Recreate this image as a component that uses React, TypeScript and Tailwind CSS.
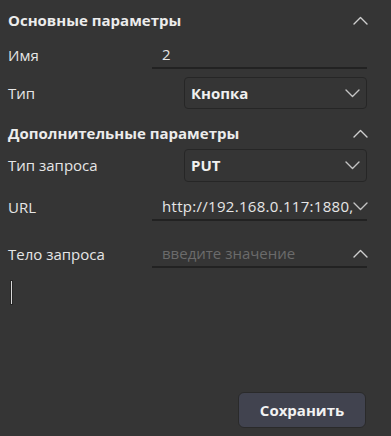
function Chevron({ up = false, className = "" }: { up?: boolean; className?: string }) {
  return (
    <svg width="15" height="9" viewBox="0 0 15 9" className={className} fill="none">
      <polyline
        points={up ? "1,8 7.5,1.5 14,8" : "1,1 7.5,7.5 14,1"}
        stroke="currentColor"
        strokeWidth="1.4"
        strokeLinecap="round"
        strokeLinejoin="round"
      />
    </svg>
  );
}

function Row({ label, className = "", children }: { label: string; className?: string; children: React.ReactNode }) {
  return (
    <div className={`flex items-center ${className}`}>
      <div className="w-[144px] shrink-0 text-[15px] text-[#e6e6e6]">{label}</div>
      <div className="flex-1 min-w-0">{children}</div>
    </div>
  );
}

function Header({ title, className = "" }: { title: string; className?: string }) {
  return (
    <div className={`flex items-center justify-between h-[30px] ${className}`}>
      <div className="text-[15px] font-bold text-[#ececec]">{title}</div>
      <Chevron up className="text-[#cfcfcf] mr-[-1px]" />
    </div>
  );
}

function SelectBox({ value, h }: { value: string; h: string }) {
  return (
    <div className={`ml-[32px] ${h} border border-[#262626] rounded-[4px] flex items-center justify-between pl-[6px] pr-[6px]`}>
      <span className="text-[15px] font-bold text-[#f0f0f0]">{value}</span>
      <Chevron className="text-[#c4c4c4]" />
    </div>
  );
}

export default function App() {
  return (
    <div
      className="w-[391px] h-[436px] bg-[#353535] flex flex-col pl-[8px] pr-[24px] pt-[5px]"
      style={{ fontFamily: '"Open Sans", "Noto Sans", sans-serif' }}
    >
      <Header title="Основные параметры" />
      <Row label="Имя" className="pt-[6px]">
        <div className="h-[28px] border-b-2 border-[#222222] flex items-center pl-[10px] text-[15px] text-[#e6e6e6]">2</div>
      </Row>
      <Row label="Тип" className="mt-[8px]">
        <SelectBox value="Кнопка" h="h-[32px]" />
      </Row>
      <Header title="Дополнительные параметры" className="mt-[9px]" />
      <Row label="Тип запроса" className="mt-[1px]">
        <SelectBox value="PUT" h="h-[33px]" />
      </Row>
      <Row label="URL" className="mt-[12px]">
        <div className="h-[27px] border-b-2 border-[#222222] flex items-center pl-[10px] text-[15px] text-[#e6e6e6]">
          <span className="flex-1 min-w-0 whitespace-nowrap overflow-hidden tracking-[0.3px]">http://192.168.0.117:1880,</span>
          <Chevron className="text-[#c4c4c4] shrink-0 mr-[-1px]" />
        </div>
      </Row>
      <Row label="Тело запроса" className="mt-[20px]">
        <div className="h-[27px] border-b-2 border-[#222222] flex items-center pl-[10px] text-[15px]">
          <span className="flex-1 text-[#6b6b6b]">введите значение</span>
          <Chevron up className="text-[#cfcfcf] shrink-0 mr-[-1px]" />
        </div>
      </Row>
      <div className="mt-[12px] ml-[2px] w-[3px] h-[25px] bg-[#d8d8d8] border border-[#262626]" />
      <div className="flex-1" />
      <div className="flex justify-end pb-[8px] pr-[1px]">
        <button className="w-[128px] h-[36px] rounded-[6px] bg-[#41434f] border border-[#2a2a2a] text-[15px] font-bold text-[#f2f2f2]">
          Сохранить
        </button>
      </div>
    </div>
  );
}
